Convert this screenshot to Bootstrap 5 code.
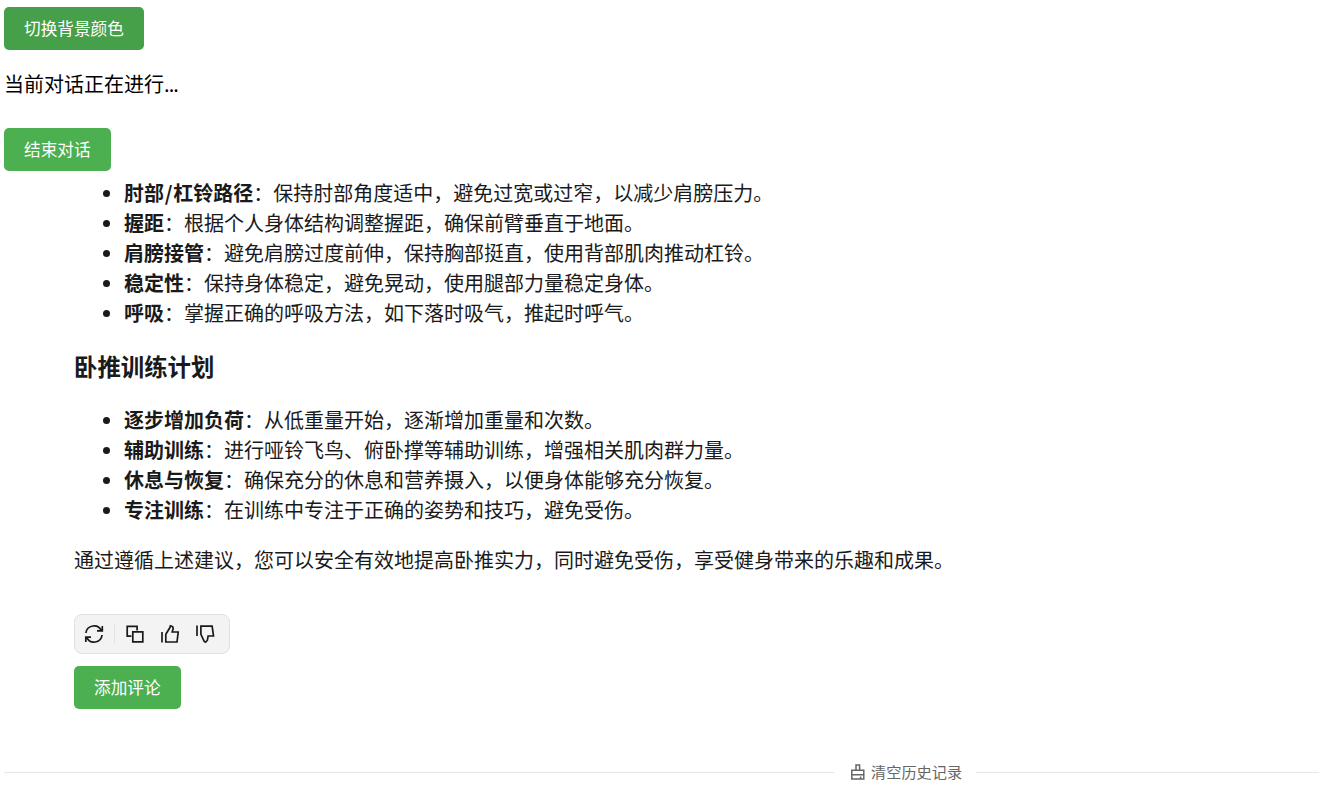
<!DOCTYPE html>
<html lang="zh-CN">
<head>
  <meta charset="UTF-8">
  <meta name="viewport" content="width=device-width, initial-scale=1.0">
  <title>对话</title>
  <!-- Bootstrap CSS -->
  <link href="https://cdn.jsdelivr.net/npm/bootstrap@5.3.0/dist/css/bootstrap.min.css" rel="stylesheet">
  <style>
    body {
      font-family: "Noto Sans CJK SC", sans-serif;
      font-size: 20px;
      line-height: 30px;
      color: #000;
      background: #fff;
      padding: 7px 0 0 4px;
      overflow: hidden;
    }
    .btn-chat { --bs-btn-color: #fff; --bs-btn-bg: #4caf50; --bs-btn-hover-color: #fff; --bs-btn-hover-bg: #45a049; --bs-btn-border-width: 0; --bs-btn-border-radius: 5px; --bs-btn-font-size: 16.67px; --bs-btn-line-height: 23px; --bs-btn-padding-x: 20px; --bs-btn-padding-y: 10px; display: block; }
    .btn-theme { --bs-btn-bg: #45a049; }
    .chat-status { margin: 19px 0 29px; }
    .chat-dots { letter-spacing: -0.9px; }
    .answer { margin: 7px 0 0 70px; color: #1a1a1a; }
    .answer ul { padding-left: 50px; margin-bottom: 20px; }
    .answer h3 { font-size: 23.4px; font-weight: 700; line-height: 36px; margin: 0 0 21px; }
    .answer li::marker { font-family: "Noto Sans", sans-serif; }
    .slash { margin: 0 0.8px; }
    .toolbar { width: 156px; height: 40px; margin: 39px 0 12px; padding: 0 9px; background: #f3f3f3; border: 1px solid #e0e0e0; border-radius: 8px; }
    .toolbar svg { width: 20px; height: 20px; fill: none; stroke: #1a1a1a; stroke-width: 1.7; }
    .toolbar-line { width: 1px; height: 20px; margin: 0 10px; background: #e3e3e3; }
    .history { margin-top: 48px; color: #666; font-size: 15.2px; }
    .history-line { height: 1px; background: #e6e6e6; }
    .history-clear { margin: 0 14px 0 17px; }
    .history-clear span { line-height: 28px; padding-bottom: 2px; }
    .history svg { width: 14px; height: 16px; margin-right: 6px; fill: none; stroke: #666; stroke-width: 1.5; }
  </style>
</head>
<body>

  <button type="button" class="btn btn-chat btn-theme">切换背景颜色</button>
  <p class="chat-status">当前对话正在进行<span class="chat-dots">...</span></p>
  <button type="button" class="btn btn-chat">结束对话</button>

  <!-- Answer -->
  <div class="answer">
    <ul>
      <li><strong>肘部<span class="slash">/</span>杠铃路径</strong>：保持肘部角度适中，避免过宽或过窄，以减少肩膀压力。</li>
      <li><strong>握距</strong>：根据个人身体结构调整握距，确保前臂垂直于地面。</li>
      <li><strong>肩膀接管</strong>：避免肩膀过度前伸，保持胸部挺直，使用背部肌肉推动杠铃。</li>
      <li><strong>稳定性</strong>：保持身体稳定，避免晃动，使用腿部力量稳定身体。</li>
      <li><strong>呼吸</strong>：掌握正确的呼吸方法，如下落时吸气，推起时呼气。</li>
    </ul>
    <h3>卧推训练计划</h3>
    <ul>
      <li><strong>逐步增加负荷</strong>：从低重量开始，逐渐增加重量和次数。</li>
      <li><strong>辅助训练</strong>：进行哑铃飞鸟、俯卧撑等辅助训练，增强相关肌肉群力量。</li>
      <li><strong>休息与恢复</strong>：确保充分的休息和营养摄入，以便身体能够充分恢复。</li>
      <li><strong>专注训练</strong>：在训练中专注于正确的姿势和技巧，避免受伤。</li>
    </ul>
    <p class="mb-0">通过遵循上述建议，您可以安全有效地提高卧推实力，同时避免受伤，享受健身带来的乐趣和成果。</p>

    <!-- Answer actions -->
    <div class="toolbar d-flex align-items-center">
      <svg viewBox="0 0 20 20"><path d="M1.9 9A8.1 8.1 0 0 1 17.3 6.6M18.3 2v4.9H13M18.1 11A8.1 8.1 0 0 1 2.7 13.4M1.8 18v-4.9H7"/></svg>
      <div class="toolbar-line"></div>
      <div class="d-flex" style="gap: 15px">
        <svg viewBox="0 0 20 20"><path d="M6.4 12.2H2.2V2.4h9.9v4.1M7.8 7.8h10v10h-10z"/></svg>
        <svg viewBox="0 0 20 20"><path d="M2 8v10.6M5.8 10.3l4-6.5.6-2 2.2.8.6 1.6-1 3.8h6L17 18H5.8z"/></svg>
        <svg viewBox="0 0 20 20"><path d="M2 1.4V12M5.9 2.2h11.2L18.5 12h-5.4l-.7 4.2-1.8 2-1.4-.8-3.3-7z"/></svg>
      </div>
    </div>
    <button type="button" class="btn btn-chat">添加评论</button>
  </div>

  <!-- Clear history -->
  <div class="history d-flex align-items-center">
    <div class="history-line" style="width: 830px"></div>
    <div class="history-clear d-flex align-items-center">
      <svg viewBox="0 0 14 16"><path d="M5 6.2V1.1h3.6v5.1M.8 6.2h12v8.9H.8zM.8 10.7h12M9.6 12.6v2.5"/></svg>
      <span>清空历史记录</span>
    </div>
    <div class="history-line flex-grow-1"></div>
  </div>

  <script src="https://cdn.jsdelivr.net/npm/bootstrap@5.3.0/dist/js/bootstrap.bundle.min.js"></script>
</body>
</html>
